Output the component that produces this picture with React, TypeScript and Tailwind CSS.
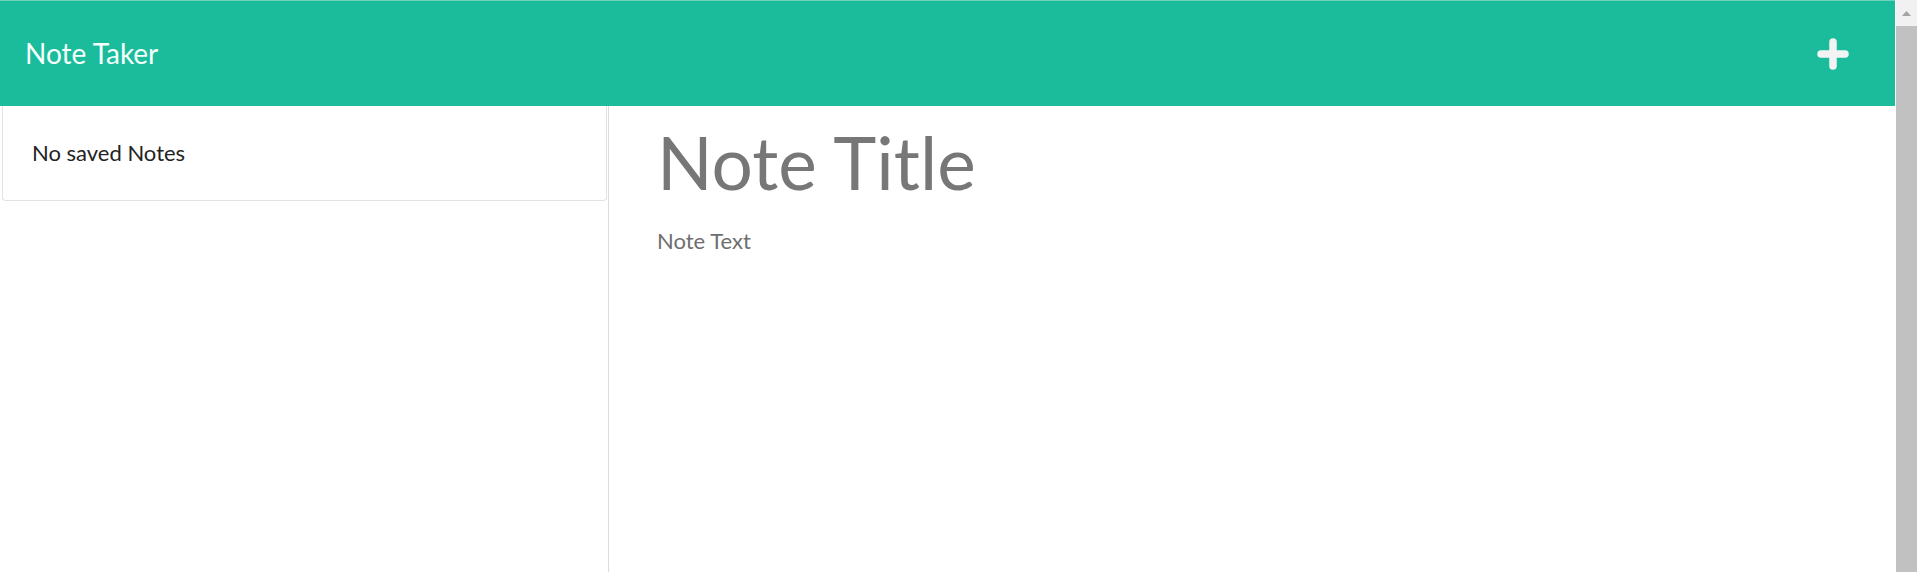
import React from "react";

export default function App() {
  return (
    <div className="flex h-[572px] w-full overflow-hidden bg-white font-['Lato','Noto_Sans',sans-serif]">
      <div className="flex min-w-0 flex-1 flex-col">
        <header className="mr-[1px] flex h-[106px] shrink-0 items-center justify-between border-t border-[#6fd0bb] bg-[#1abc9c] pl-[25px] pr-[46px]">
          <span className="text-[28px] leading-[1.2] text-[#f6fffc]">Note Taker</span>
          <svg width="32" height="32" viewBox="0 0 32 32" className="mt-[1px]">
            <path d="M16 4 V28 M4 16 H28" stroke="#f2f4f3" strokeWidth="7.5" strokeLinecap="round" fill="none" />
          </svg>
        </header>
        <div className="flex min-h-0 flex-1">
          <aside className="w-[609px] shrink-0 border-r border-[#dcdcdc] pl-[2px] pr-[1px]">
            <div className="rounded-b-[4px] border-x border-b border-[#e2e2e2] pl-[29px] pt-[34px] pb-[34px]">
              <p className="text-[22px] leading-[1.2] text-[#222222]">No saved Notes</p>
            </div>
          </aside>
          <main className="flex-1 pl-[48px] pt-[13px]">
            <h1 className="text-[73px] leading-[1.2] text-[#777777]">Note Title</h1>
            <p className="mt-[21px] text-[22px] leading-[1.2] text-[#6e6e6e]">Note Text</p>
          </main>
        </div>
      </div>
      <div className="flex w-[21px] shrink-0 flex-col bg-[#f1f1f1]">
        <div className="flex h-[26px] items-center justify-center">
          <svg width="9" height="5" viewBox="0 0 9 5">
            <path d="M0 5 L4.5 0 L9 5 Z" fill="#a3a3a3" />
          </svg>
        </div>
        <div className="flex-1 bg-[#c1c1c1]" />
      </div>
    </div>
  );
}
